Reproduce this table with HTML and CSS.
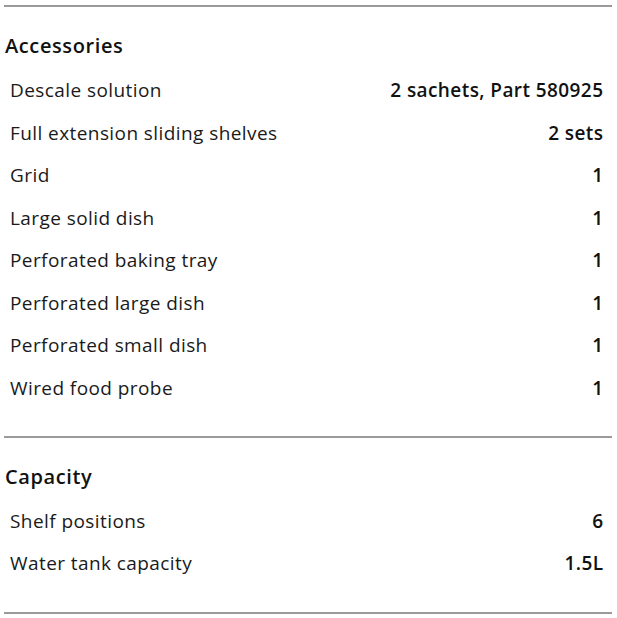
FILE: index.html
```html
<!DOCTYPE html>
<html>
<head>
<meta charset="utf-8">
<link rel="stylesheet" href="styles.css">
</head>
<body>
<div class="specs">
  <section class="group">
    <h2 class="group-title">Accessories</h2>
    <div class="row"><span class="label">Descale solution</span><span class="value">2 sachets, Part 580925</span></div>
    <div class="row"><span class="label">Full extension sliding shelves</span><span class="value">2 sets</span></div>
    <div class="row"><span class="label">Grid</span><span class="value">1</span></div>
    <div class="row"><span class="label">Large solid dish</span><span class="value">1</span></div>
    <div class="row"><span class="label">Perforated baking tray</span><span class="value">1</span></div>
    <div class="row"><span class="label">Perforated large dish</span><span class="value">1</span></div>
    <div class="row"><span class="label">Perforated small dish</span><span class="value">1</span></div>
    <div class="row"><span class="label">Wired food probe</span><span class="value">1</span></div>
  </section>
  <section class="group">
    <h2 class="group-title">Capacity</h2>
    <div class="row"><span class="label">Shelf positions</span><span class="value">6</span></div>
    <div class="row"><span class="label">Water tank capacity</span><span class="value">1.5L</span></div>
  </section>
  <div class="end-rule"></div>
</div>
</body>
</html>
```

FILE: styles.css
```css
html, body {
  margin: 0;
  padding: 0;
  background: #ffffff;
}
body {
  font-family: "Open Sans", "Liberation Sans", sans-serif;
  color: #1a1a1a;
}
.specs {
  padding-top: 5px;
  margin: 0 5px 0 4px;
}
.group {
  border-top: 2px solid #9a9a9a;
  padding: 27px 9px 27px 1px;
}
.group-title {
  margin: 0 0 10.75px 0;
  font-size: 20px;
  line-height: 24px;
  font-weight: 600;
  letter-spacing: 0.6px;
  color: #111;
}
.row {
  display: flex;
  justify-content: space-between;
  align-items: center;
  height: 42.5px;
  font-size: 19px;
  letter-spacing: 0.42px;
  padding-left: 5px;
}
.label {
  font-weight: 400;
}
.value {
  font-weight: 600;
  color: #111;
  margin-right: -0.45px;
}
.end-rule {
  border-top: 2px solid #9a9a9a;
}
```
